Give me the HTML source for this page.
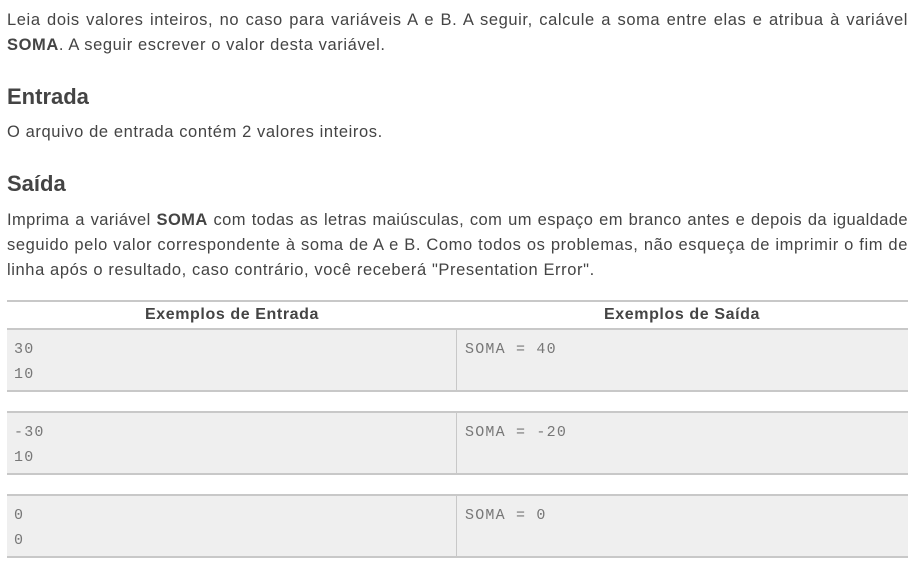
<!DOCTYPE html>
<html><head><meta charset="utf-8"><style>
body{margin:0;width:913px;height:562px;background:#fff;font-family:"Liberation Sans",sans-serif;color:#444;position:relative;overflow:hidden}
.p{position:absolute;left:7px;width:901px;font-size:16.5px;line-height:25px;letter-spacing:0.6px}
.p div{text-align:justify;text-align-last:justify;white-space:nowrap}
.p div.l{text-align-last:left}
h2{position:absolute;left:7px;margin:0;font-size:22px;font-weight:bold;color:#444}
.box{position:absolute;left:7px;width:901px;background:#efefef;border-top:2px solid #c8c8c8;border-bottom:2px solid #c8c8c8;height:60px}
.box .d{position:absolute;left:449px;top:0;bottom:0;border-left:1px solid #c8c8c8}
.m{position:absolute;font-family:"Liberation Mono",monospace;font-size:15px;letter-spacing:1.2px;color:#777;line-height:25px;white-space:pre}
.th{position:absolute;top:306px;font-weight:bold;font-size:16px;letter-spacing:0.6px;color:#444;text-align:center;width:450px}
</style></head><body>
<div class="p" style="top:8px"><div>Leia dois valores inteiros, no caso para variáveis A e B. A seguir, calcule a soma entre elas e atribua à variável</div><div class="l"><b>SOMA</b>. A seguir escrever o valor desta variável.</div></div>
<h2 style="top:84px">Entrada</h2>
<div class="p" style="top:120px"><div class="l">O arquivo de entrada contém 2 valores inteiros.</div></div>
<h2 style="top:171px">Saída</h2>
<div class="p" style="top:208px"><div style="letter-spacing:0.4px">Imprima a variável <b>SOMA</b> com todas as letras maiúsculas, com um espaço em branco antes e depois da igualdade</div><div>seguido pelo valor correspondente à soma de A e B. Como todos os problemas, não esqueça de imprimir o fim de</div><div class="l">linha após o resultado, caso contrário, você receberá "Presentation Error".</div></div>
<div style="position:absolute;left:7px;width:901px;top:300px;border-top:2px solid #c8c8c8"></div>
<div class="th" style="left:7px">Exemplos de Entrada</div>
<div class="th" style="left:457px">Exemplos de Saída</div>
<div class="box" style="top:328px"><div class="d"></div><div class="m" style="left:7px;top:7px">30
10</div><div class="m" style="left:458px;top:7px">SOMA = 40</div></div>
<div class="box" style="top:411px"><div class="d"></div><div class="m" style="left:7px;top:7px">-30
10</div><div class="m" style="left:458px;top:7px">SOMA = -20</div></div>
<div class="box" style="top:494px"><div class="d"></div><div class="m" style="left:7px;top:7px">0
0</div><div class="m" style="left:458px;top:7px">SOMA = 0</div></div>
</body></html>
